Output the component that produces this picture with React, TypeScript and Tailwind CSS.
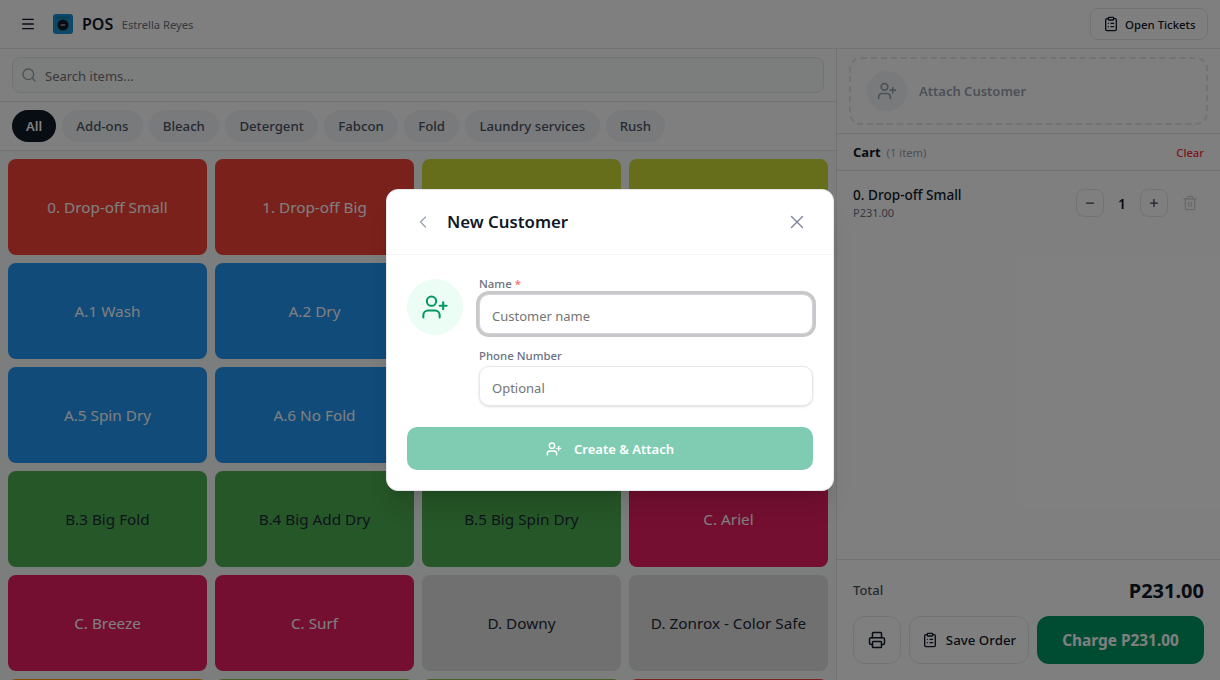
import { Menu, Search, ClipboardList, UserPlus, Minus, Plus, Trash2, Printer, ChevronLeft, X } from "lucide-react";

const chips = ["Add-ons", "Bleach", "Detergent", "Fabcon", "Fold", "Laundry services", "Rush"];

const items: [string, string, string][] = [
  ["0. Drop-off Small", "bg-[#f44336]", "text-white"],
  ["1. Drop-off Big", "bg-[#f44336]", "text-white"],
  ["", "bg-[#cddc39]", "text-gray-800"],
  ["", "bg-[#cddc39]", "text-gray-800"],
  ["A.1 Wash", "bg-[#2196f3]", "text-white"],
  ["A.2 Dry", "bg-[#2196f3]", "text-white"],
  ["", "bg-[#2196f3]", "text-white"],
  ["", "bg-[#2196f3]", "text-white"],
  ["A.5 Spin Dry", "bg-[#2196f3]", "text-white"],
  ["A.6 No Fold", "bg-[#2196f3]", "text-white"],
  ["", "bg-[#4caf50]", "text-gray-800"],
  ["", "bg-[#4caf50]", "text-gray-800"],
  ["B.3 Big Fold", "bg-[#4caf50]", "text-gray-800"],
  ["B.4 Big Add Dry", "bg-[#4caf50]", "text-gray-800"],
  ["B.5 Big Spin Dry", "bg-[#4caf50]", "text-gray-800"],
  ["C. Ariel", "bg-[#e91e63]", "text-white"],
  ["C. Breeze", "bg-[#e91e63]", "text-white"],
  ["C. Surf", "bg-[#e91e63]", "text-white"],
  ["D. Downy", "bg-[#e0e0e0]", "text-gray-800"],
  ["D. Zonrox - Color Safe", "bg-[#e0e0e0]", "text-gray-800"],
  ["", "bg-[#ff9800]", "text-gray-800"],
  ["", "bg-[#8bc34a]", "text-gray-800"],
  ["", "bg-[#8bc34a]", "text-gray-800"],
  ["", "bg-[#f44336]", "text-white"],
];

function Logo() {
  return (
    <svg width="20" height="20" viewBox="0 0 20 20" className="shrink-0">
      <rect width="20" height="20" rx="3" fill="#1a93cc" />
      <rect x="3" y="2.5" width="14" height="2" rx="1" fill="#157aa8" />
      <circle cx="10" cy="11" r="5.5" fill="#111827" />
      <rect x="7.5" y="10.2" width="5" height="1.6" rx="0.8" fill="#9ca3af" />
    </svg>
  );
}

export default function App() {
  return (
    <div className="relative h-[680px] w-[1220px] overflow-hidden bg-[#f9fafb] font-['Noto_Sans','Open_Sans',sans-serif] text-gray-900">
      <header className="flex h-[49px] items-center justify-between border-b border-gray-200 bg-white pl-5 pr-[12px]">
        <div className="flex items-center">
          <Menu size={16} strokeWidth={2} className="text-gray-900" />
          <div className="ml-[17px]"><Logo /></div>
          <span className="ml-[9px] text-base font-semibold leading-none">POS</span>
          <span className="ml-[8.5px] pt-[2px] text-[11.2px] text-gray-500">Estrella Reyes</span>
        </div>
        <button className="flex h-[32px] w-[118px] items-center gap-[6px] rounded-lg border border-gray-200 bg-white px-3 text-[11.4px] font-medium">
          <ClipboardList size={16} className="shrink-0" />
          <span className="whitespace-nowrap pt-[2px]">Open Tickets</span>
        </button>
      </header>
      <div className="flex h-[631px]">
        <main className="flex w-[837px] shrink-0 flex-col overflow-hidden border-r border-gray-200">
          <div className="shrink-0 border-b border-gray-200 bg-white px-3 py-2">
            <div className="flex h-9 items-center gap-2 rounded-lg border border-gray-200 bg-[#f9fafb] px-2">
              <Search size={16} className="text-gray-400" />
              <span className="pt-[3px] text-[13px] text-[#757575]">Search items...</span>
            </div>
          </div>
          <div className="flex h-[49px] shrink-0 items-center gap-[6px] border-b border-gray-200 bg-white px-3">
            <span className="flex h-8 items-center rounded-full bg-[#111827] px-[14px] pt-[2px] text-[13px] font-semibold text-white">All</span>
            {chips.map((c) => (
              <span key={c} className="flex h-8 items-center rounded-full bg-gray-100 px-[14.25px] pt-[2px] text-[13.2px] font-medium text-gray-600">{c}</span>
            ))}
          </div>
          <div className="grid grid-cols-4 gap-2 p-2">
            {items.map(([name, bg, fg], i) => (
              <div key={i} className={`flex h-24 items-center justify-center rounded-lg text-[15.3px] ${bg} ${fg}`}>{name}</div>
            ))}
          </div>
        </main>
        <aside className="flex min-w-0 flex-1 flex-col bg-white">
          <div className="shrink-0 border-b border-gray-200 px-3 py-2">
            <div className="flex h-[68px] items-center gap-3 rounded-xl border-2 border-dashed border-gray-200 px-4">
              <span className="flex h-10 w-10 items-center justify-center rounded-full bg-gray-100 text-gray-400"><UserPlus size={20} /></span>
              <span className="pt-[2px] text-[13px] font-semibold text-gray-400">Attach Customer</span>
            </div>
          </div>
          <div className="flex h-[37px] shrink-0 items-center justify-between border-b border-gray-200 px-4 pt-[2px]">
            <div className="flex items-center gap-[6px]">
              <span className="text-[13px] font-bold">Cart</span>
              <span className="text-[11.2px] text-gray-400">(1 item)</span>
            </div>
            <span className="text-[11.2px] font-medium text-red-500">Clear</span>
          </div>
          <div className="flex flex-1 items-start justify-between px-4 pt-[15px]">
            <div>
              <div className="text-[13.6px] font-medium leading-[18px]">0. Drop-off Small</div>
              <div className="text-[11px] leading-[18px] text-gray-500">P231.00</div>
            </div>
            <div className="mr-[6px] mt-[3px] flex items-center">
              <span className="flex h-7 w-7 items-center justify-center rounded-lg border border-gray-200"><Minus size={12} strokeWidth={2.5} className="text-gray-700" /></span>
              <span className="w-9 pt-[2px] text-center text-sm font-semibold">1</span>
              <span className="flex h-7 w-7 items-center justify-center rounded-lg border border-gray-200"><Plus size={12} strokeWidth={2.5} className="text-gray-700" /></span>
              <Trash2 size={16} className="ml-[14px] text-gray-300" />
            </div>
          </div>
          <div className="shrink-0 border-t border-gray-200 px-4 pb-4 pt-[17px]">
            <div className="flex items-center justify-between">
              <span className="text-[13px] font-medium text-gray-600">Total</span>
              <span className="text-[20px] font-bold leading-[28px]">P231.00</span>
            </div>
            <div className="mt-[11px] flex gap-2">
              <button className="flex h-12 w-12 items-center justify-center rounded-xl border border-gray-200"><Printer size={18} /></button>
              <button className="flex h-12 w-[120px] items-center justify-center gap-2 rounded-xl border border-gray-200 text-[13.3px] font-medium"><ClipboardList size={16} className="shrink-0" /><span className="whitespace-nowrap pt-[2px]">Save Order</span></button>
              <button className="flex h-12 flex-1 items-center justify-center rounded-xl bg-[#009966] pt-[2px] text-[15.4px] font-bold text-white">Charge P231.00</button>
            </div>
          </div>
        </aside>
      </div>

      <div className="absolute inset-0 flex items-center justify-center bg-black/50">
        <div className="w-[448px] overflow-hidden rounded-xl border border-gray-200 bg-white shadow-xl">
          <div className="flex h-[65px] items-center justify-between border-b border-gray-100 pl-[26px] pr-[25px]">
            <div className="flex items-center">
              <ChevronLeft size={20} strokeWidth={1.5} className="text-gray-400" />
              <span className="ml-[14px] text-[16.8px] font-semibold">New Customer</span>
            </div>
            <X size={22} strokeWidth={1.5} className="text-[#7b8494]" />
          </div>
          <div className="px-5 pb-5 pt-[21px]">
            <div className="flex gap-4">
              <span className="mt-[3px] flex h-14 w-14 shrink-0 items-center justify-center rounded-full bg-[#ecfdf5] text-[#009966]"><UserPlus size={28} strokeWidth={1.75} /></span>
              <div className="flex flex-1 flex-col">
                <label className="text-[11.4px] font-medium leading-4 text-gray-500">Name <span className="text-red-400">*</span></label>
                <div className="mt-[2px] flex h-10 items-center rounded-[10px] border border-gray-300 bg-white px-3 pt-[5px] text-[13px] text-[#757575] shadow-[0_0_0_3px_#c8c8c8]">Customer name</div>
                <label className="mt-[14px] text-[11.4px] font-medium leading-4 text-gray-500">Phone Number</label>
                <div className="mt-[2px] flex h-10 items-center rounded-[10px] border border-gray-200 bg-white px-3 pt-[5px] text-[13px] text-[#757575] shadow-sm">Optional</div>
              </div>
            </div>
            <button className="mt-[21px] flex h-[43px] w-full items-center justify-center gap-3 rounded-[10px] bg-[#80ccb3] text-[13px] font-semibold text-white">
              <UserPlus size={16} className="shrink-0" />
              <span className="pt-[2px]">Create &amp; Attach</span>
            </button>
          </div>
        </div>
      </div>
    </div>
  );
}
